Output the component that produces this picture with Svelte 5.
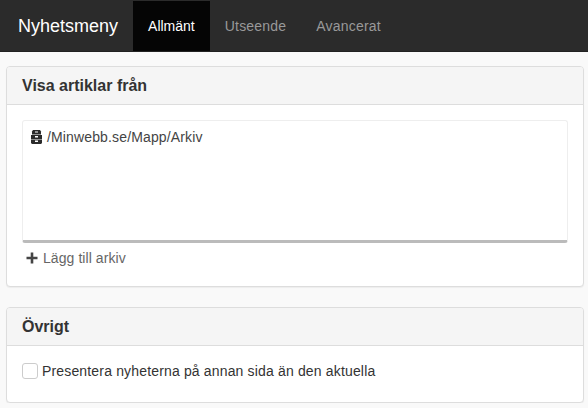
<script>
const tabs = [
  { label: 'Allmänt', active: true },
  { label: 'Utseende', active: false },
  { label: 'Avancerat', active: false }
]
</script>

<nav class="navbar">
  <span class="brand">Nyhetsmeny</span>
  {#each tabs as tab}
    <a class="tab" class:active={tab.active} href="#top">{tab.label}</a>
  {/each}
</nav>

<main>
  <section class="panel first">
    <h3>Visa artiklar från</h3>
    <div class="body">
      <div class="list">
        <div class="item">
          <svg class="archive" width="11" height="14" viewBox="0 0 11 14">
            <path d="M2 0h7l1 1.5v3H1v-3z" fill="#2b2b2b" />
            <rect x="4" y="1.5" width="3" height="1" fill="#fff" />
            <rect x="0" y="5" width="11" height="4" fill="#2b2b2b" />
            <rect x="4" y="6" width="3" height="1.5" fill="#fff" />
            <path d="M0 9.5h11V13l-1 1H1l-1-1z" fill="#2b2b2b" />
            <rect x="4" y="10.5" width="3" height="1.5" fill="#fff" />
          </svg>
          <span class="path">/Minwebb.se/Mapp/Arkiv</span>
        </div>
      </div>
      <a class="add" href="#top">
        <svg width="12" height="12" viewBox="0 0 12 12">
          <path d="M4.7 0.5h2.6v4.2h4.2v2.6H7.3v4.2H4.7V7.3H0.5V4.7h4.2z" fill="#444" />
        </svg>
        Lägg till arkiv
      </a>
    </div>
  </section>

  <section class="panel">
    <h3>Övrigt</h3>
    <div class="body other">
      <label class="check">
        <span class="box"></span>
        Presentera nyheterna på annan sida än den aktuella
      </label>
    </div>
  </section>
</main>

<style>
  :global(body) {
    margin: 0;
    background: #f9f9f9;
    font-family: "Liberation Sans", Arial, sans-serif;
    font-size: 14px;
    color: #333;
  }
  .navbar {
    display: flex;
    height: 50px;
    padding-top: 1px;
    border-bottom: 1px solid #222;
    background: #2b2b2b;
  }
  .brand {
    padding: 0 15px 0 18px;
    line-height: 50px;
    font-size: 18px;
    color: #fff;
  }
  .tab {
    padding: 0 15px;
    line-height: 50px;
    letter-spacing: 0.2px;
    color: #999;
    text-decoration: none;
  }
  .tab.active {
    letter-spacing: 0;
    background: #050505;
    color: #fff;
  }
  main {
    padding: 14px 4px 0 6px;
  }
  .panel {
    margin-top: 20px;
    border: 1px solid #ddd;
    border-radius: 4px;
    background: #fff;
    box-shadow: 0 1px 1px rgba(0, 0, 0, 0.05);
    overflow: hidden;
  }
  .panel.first {
    margin-top: 0;
  }
  h3 {
    margin: 0;
    padding: 10px 15px;
    height: 17px;
    line-height: 17px;
    font-size: 16px;
    font-weight: bold;
    background: #f5f5f5;
    border-bottom: 1px solid #ddd;
  }
  .body {
    padding: 15px;
  }
  .list {
    height: 105px;
    padding: 7px 8px;
    border: 1px solid #eee;
    border-bottom: 3px solid #bbb;
    border-radius: 3px;
  }
  .item {
    display: flex;
    align-items: center;
    gap: 5px;
    height: 18px;
  }
  .archive {
    flex: none;
  }
  .path {
    letter-spacing: 0.14px;
    color: #444;
  }
  .add {
    display: flex;
    align-items: center;
    gap: 5px;
    margin: 7px 0 5px 4px;
    height: 16px;
    letter-spacing: 0.07px;
    color: #666;
    text-decoration: none;
  }
  .other {
    height: 26px;
  }
  .check {
    display: flex;
    align-items: center;
    gap: 4px;
    height: 20px;
    letter-spacing: 0.16px;
  }
  .box {
    width: 14px;
    height: 14px;
    border: 1px solid #ccc;
    border-radius: 3px;
    background: #fff;
  }
</style>
